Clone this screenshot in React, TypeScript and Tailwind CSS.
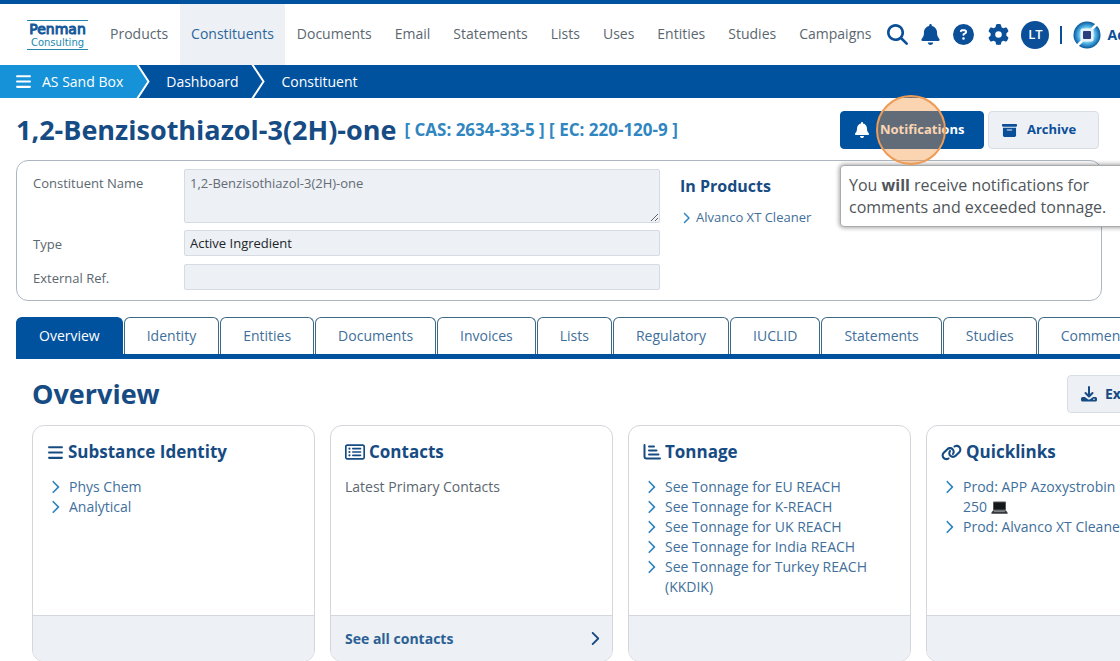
import React from "react";
import {
  FaBars,
  FaBell,
  FaBoxArchive,
  FaChevronRight,
  FaCircleQuestion,
  FaGear,
  FaLink,
  FaMagnifyingGlass,
  FaRegRectangleList,
} from "react-icons/fa6";

const navItems = [
  "Products",
  "Constituents",
  "Documents",
  "Email",
  "Statements",
  "Lists",
  "Uses",
  "Entities",
  "Studies",
  "Campaigns",
];

const tabs = [
  "Overview",
  "Identity",
  "Entities",
  "Documents",
  "Invoices",
  "Lists",
  "Regulatory",
  "IUCLID",
  "Statements",
  "Studies",
  "Comments",
];

const tonnageLinks = [
  "See Tonnage for EU REACH",
  "See Tonnage for K-REACH",
  "See Tonnage for UK REACH",
  "See Tonnage for India REACH",
  "See Tonnage for Turkey REACH (KKDIK)",
];

function ChartIcon() {
  return (
    <svg width="18" height="16" viewBox="0 0 18 16" fill="none" stroke="currentColor" strokeWidth="2" strokeLinecap="round">
      <path d="M1.5 1v11.5q0 2 2 2H17" />
      <path d="M6 2.5h5M6 6.5h7.5M6 10.5h9.5" />
    </svg>
  );
}

function ExportIcon() {
  return (
    <svg width="16" height="16" viewBox="0 0 16 16">
      <path d="M8 1v9M4.5 7 8 10.5 11.5 7" fill="none" stroke="currentColor" strokeWidth="2" strokeLinecap="round" strokeLinejoin="round" />
      <path
        d="M1.5 11h2.3L6.6 13q1.4 1 2.8 0l2.8-2h2.3q1.5 0 1.5 1.5v1.5q0 1.5-1.5 1.5h-13Q0 15.5 0 14v-1.5q0-1.5 1.5-1.5z"
        fill="currentColor"
      />
      <circle cx="13" cy="13.3" r="0.8" fill="#edf0f6" />
    </svg>
  );
}

function LaptopIcon() {
  return (
    <svg className="inline-block align-[-2px]" width="17" height="13" viewBox="0 0 17 13" role="img" aria-label="laptop">
      <rect x="2" y="0.5" width="13" height="9" rx="1" fill="#55595c" />
      <rect x="3" y="1.5" width="11" height="7" fill="#15181a" />
      <path d="M2 9.5h13l1.8 2.5q0 .8-.8.8H1q-.8 0-.8-.8z" fill="#33363a" />
      <path d="M3 10.5h11" stroke="#909498" strokeWidth="0.8" />
    </svg>
  );
}

function BrandMark() {
  return (
    <svg width="28" height="28" viewBox="0 0 28 28">
      <defs>
        <radialGradient id="brand">
          <stop offset="35%" stopColor="#e2f4fd" />
          <stop offset="62%" stopColor="#54b9e8" />
          <stop offset="100%" stopColor="#07559c" />
        </radialGradient>
      </defs>
      <circle cx="14" cy="14" r="13.5" fill="url(#brand)" />
      <path d="M18 9 26 1M10 19 2 27" stroke="#fff" strokeWidth="2.5" />
      <rect x="7.5" y="7.5" width="13" height="13" rx="2" fill="#e9f4fa" />
      <rect x="10" y="10" width="8" height="8" rx="1" fill="#2c3f7c" />
    </svg>
  );
}

function CrumbArrow({ fill }: { fill: string }) {
  return (
    <svg width="16" height="33" viewBox="0 0 16 33" className="shrink-0">
      <path d="M0 0h2l11 16.5L2 33H0z" fill={fill} />
      <path d="M2 -1 13.5 16.5 2 34" fill="none" stroke="#fff" strokeWidth="2" />
    </svg>
  );
}

function LinkItem({ children }: { children: React.ReactNode }) {
  return (
    <li className="flex">
      <FaChevronRight className="mt-[3px] mr-2 h-[14px] w-3 shrink-0 text-[#2f86c0]" />
      <a href="#" className="text-[#416f9b]">
        {children}
      </a>
    </li>
  );
}

type CardProps = {
  icon: React.ReactNode;
  title: string;
  footer?: React.ReactNode;
  children: React.ReactNode;
};

function Card({ icon, title, footer, children }: CardProps) {
  return (
    <section className="flex flex-col overflow-hidden rounded-xl border border-[#d3d6da] bg-white">
      <div className="min-h-[189px] grow pt-3.5 pr-5 pb-4 pl-3.5">
        <h3 className="flex items-center gap-1 text-[17px] leading-6 font-bold text-[#164b83]">
          {icon}
          {title}
        </h3>
        <div className="mt-[13px] text-sm leading-5">{children}</div>
      </div>
      <div className="flex h-[46px] items-center border-t border-[#d3d6da] bg-[#edf0f5] pr-2.5 pl-3.5">{footer}</div>
    </section>
  );
}

export default function App() {
  return (
    <div className="min-h-[661px] overflow-hidden bg-white font-['Open_Sans',sans-serif] text-[#5b6770]">
      <header className="flex h-[65px] items-center overflow-hidden border-t-4 border-[#00529f] pl-[27px] whitespace-nowrap">
        <a
          href="#"
          className="mr-[11px] flex w-[61px] shrink-0 flex-col items-center border-y border-[#2585a8] font-['DejaVu_Sans',sans-serif]"
        >
          <span className="text-[14px] leading-4 text-[#15599a] [-webkit-text-stroke:1px]">Penman</span>
          <span className="text-[10px] leading-3 text-[#2389ae]">Consulting</span>
        </a>
        <nav className="flex h-full gap-px">
          {navItems.map((item) => (
            <a
              key={item}
              href="#"
              className={`flex items-center px-[11px] pb-0.5 text-sm ${
                item === "Constituents" ? "bg-[#edf0f5] text-[#2c6699]" : ""
              }`}
            >
              {item}
            </a>
          ))}
        </nav>
        <div className="ml-[5px] flex shrink-0 items-center text-[#0b4f99]">
          <button aria-label="Search">
            <FaMagnifyingGlass size={21} />
          </button>
          <button aria-label="Alerts" className="ml-3">
            <FaBell size={21} />
          </button>
          <button aria-label="Help" className="ml-3">
            <FaCircleQuestion size={21} />
          </button>
          <button aria-label="Settings" className="ml-3.5">
            <FaGear size={21} />
          </button>
          <button className="ml-3 h-7 w-7 rounded-full bg-[#0b4f99] text-[13px] font-semibold text-white">LT</button>
          <span className="mx-[11px] h-[18px] w-0.5 bg-[#0b4f99]" />
          <BrandMark />
          <span className="ml-1.5 text-sm font-bold">Admin</span>
        </div>
      </header>

      <nav aria-label="Breadcrumb" className="flex h-[33px] items-center bg-[#00529f] text-sm text-white">
        <a href="#" className="flex h-full items-center gap-2.5 bg-[#1592d8] pr-3 pl-[15px]">
          <FaBars size={17} />
          AS Sand Box
        </a>
        <CrumbArrow fill="#1592d8" />
        <a href="#" className="pr-3 pl-[15px]">
          Dashboard
        </a>
        <CrumbArrow fill="#00529f" />
        <a href="#" className="pl-[15px]">
          Constituent
        </a>
      </nav>

      <main className="pt-[13px]">
        <div className="mr-[21px] ml-4 flex items-center whitespace-nowrap">
          <h1 className="text-[27px] leading-[38px] font-bold text-[#164b83]">1,2-Benzisothiazol-3(2H)-one</h1>
          <span className="ml-2 text-[17px] font-bold text-[#2f86c0]">[ CAS: 2634-33-5 ] [ EC: 220-120-9 ]</span>
          <div className="relative ml-auto shrink-0">
            <button className="flex h-[38px] w-[144px] items-center rounded border border-[#00529f] bg-[#00529f] pl-[13px] text-[13px] font-bold text-white">
              <FaBell size={16} className="mr-2.5" />
              Notifications
            </button>
            <span className="pointer-events-none absolute -top-4 left-9 z-20 h-[70px] w-[70px] rounded-full border-2 border-[#ee9b55] bg-[#f5943f]/40" />
            <div
              role="tooltip"
              className="absolute top-[54px] left-0 z-10 w-[300px] rounded border border-[#a9acaf] bg-white px-2 py-2 text-base leading-[22px] text-[#50555a] shadow-[0_0_4px_1px_rgba(0,0,0,0.35)]"
            >
              You <strong>will</strong> receive notifications for
              <br />
              comments and exceeded tonnage.
            </div>
          </div>
          <button className="ml-1 flex h-[38px] w-[111px] shrink-0 items-center rounded border border-[#d8dde5] bg-[#edf0f5] pl-[13px] text-[13px] font-bold text-[#0b4f99]">
            <FaBoxArchive size={15} className="mr-2.5" />
            Archive
          </button>
        </div>

        <section className="mr-[18px] ml-4 mt-[11px] flex rounded-xl border border-[#aeb7c0] px-4 pt-2 pb-[10px] text-[13px]">
          <form className="grid w-[627px] shrink-0 grid-cols-[151px_1fr] text-[13px]">
            <label htmlFor="name" className="pt-[5px]">
              Constituent Name
            </label>
            <textarea
              id="name"
              readOnly
              className="mb-[7px] block h-[54px] resize-y rounded-xs border border-[#d5dae3] bg-[#edf0f5] px-[5px] py-1 text-[#646c74]"
              defaultValue="1,2-Benzisothiazol-3(2H)-one"
            />
            <label htmlFor="type" className="pt-[5px]">
              Type
            </label>
            <input
              id="type"
              readOnly
              className="mb-2 h-[26px] rounded-xs border border-[#d5dae3] bg-[#edf0f5] px-[5px] text-[#20252a]"
              defaultValue="Active Ingredient"
            />
            <label htmlFor="ref" className="pt-[5px]">
              External Ref.
            </label>
            <input id="ref" readOnly className="h-[26px] rounded-xs border border-[#d5dae3] bg-[#edf0f5] px-[5px]" />
          </form>
          <div className="ml-5 pt-[5px]">
            <h2 className="text-base leading-6 font-bold text-[#164b83]">In Products</h2>
            <a href="#" className="mt-2.5 flex items-center gap-1 text-[13px] text-[#416f9b]">
              <FaChevronRight size={12} className="text-[#2f86c0]" />
              Alvanco XT Cleaner
            </a>
          </div>
        </section>

        <div role="tablist" className="mt-4 ml-4 flex gap-px overflow-hidden border-b-[5px] border-[#00529f]">
          {tabs.map((tab, i) => (
            <button
              key={tab}
              role="tab"
              aria-selected={i === 0}
              className={`h-[37px] shrink-0 rounded-t-md border border-b-0 px-[22px] text-sm ${
                i === 0 ? "border-[#00529f] bg-[#00529f] font-medium text-white" : "border-[#3d6a84] bg-white text-[#416f9b]"
              }`}
            >
              {tab}
            </button>
          ))}
        </div>

        <div className="mt-4 ml-8 flex items-center justify-between overflow-hidden">
          <h2 className="text-[27px] leading-[38px] font-bold text-[#164b83]">Overview</h2>
          <button className="-mr-12 flex h-[38px] w-[101px] items-center rounded border border-[#d8dde5] bg-[#edf0f5] pl-[13px] text-sm font-bold text-[#164b83]">
            <span className="mr-2">
              <ExportIcon />
            </span>
            Export
          </button>
        </div>

        <div className="mt-3 ml-8 grid auto-cols-[283px] grid-flow-col gap-[15px]">
          <Card icon={<FaBars size={17} />} title="Substance Identity">
            <ul className="pl-0.5">
              <LinkItem>Phys Chem</LinkItem>
              <LinkItem>Analytical</LinkItem>
            </ul>
          </Card>
          <Card
            icon={<FaRegRectangleList size={20} />}
            title="Contacts"
            footer={
              <a href="#" className="flex grow items-center justify-between text-sm font-bold text-[#2b6094]">
                See all contacts
                <FaChevronRight size={15} className="text-[#164b83]" />
              </a>
            }
          >
            Latest Primary Contacts
          </Card>
          <Card icon={<ChartIcon />} title="Tonnage">
            <ul className="pl-0.5">
              {tonnageLinks.map((link) => (
                <LinkItem key={link}>{link}</LinkItem>
              ))}
            </ul>
          </Card>
          <Card icon={<FaLink size={21} />} title="Quicklinks">
            <ul className="pl-0.5">
              <LinkItem>
                Prod: APP Azoxystrobin
                <br />
                250 <LaptopIcon />
              </LinkItem>
              <LinkItem>Prod: Alvanco XT Cleaner</LinkItem>
            </ul>
          </Card>
        </div>
      </main>
    </div>
  );
}
